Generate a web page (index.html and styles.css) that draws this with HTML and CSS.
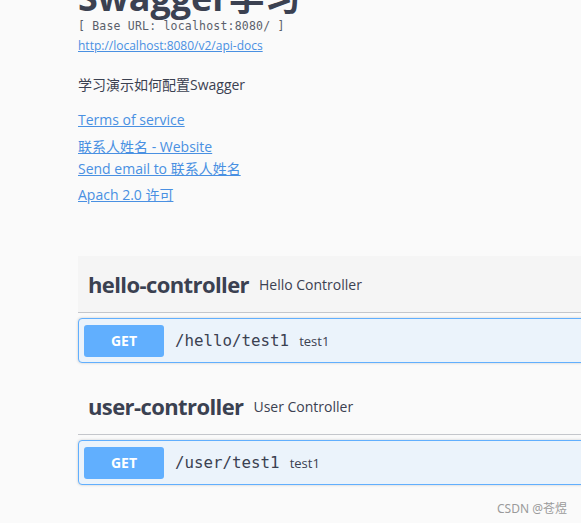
FILE: index.html
```html
<!DOCTYPE html>
<html>
<head>
<meta charset="utf-8">
<link rel="stylesheet" href="styles.css">
</head>
<body>
<div class="page">
  <div class="info">
    <h2 class="title">Swagger学习</h2>
    <div class="base-url">[ Base URL: localhost:8080/ ]</div>
    <a class="spec-link" href="#">http://localhost:8080/v2/api-docs</a>
    <div class="description">学习演示如何配置Swagger</div>
    <div class="terms"><a href="#">Terms of service</a></div>
    <div class="contact">
      <a href="#">联系人姓名 - Website</a>
      <a href="#">Send email to 联系人姓名</a>
    </div>
    <div class="license"><a href="#">Apach 2.0 许可</a></div>
  </div>

  <div class="tags">
    <div class="tag-section">
      <h3 class="tag-header hover"><span class="tag-name">hello-controller</span><small class="tag-desc">Hello Controller</small></h3>
      <div class="opblock">
        <span class="method">GET</span>
        <span class="path">/hello/test1</span>
        <span class="summary">test1</span>
      </div>
    </div>

    <div class="tag-section">
      <h3 class="tag-header"><span class="tag-name">user-controller</span><small class="tag-desc">User Controller</small></h3>
      <div class="opblock">
        <span class="method">GET</span>
        <span class="path">/user/test1</span>
        <span class="summary">test1</span>
      </div>
    </div>
  </div>
</div>
<div class="watermark">CSDN @苍煜</div>
</body>
</html>
```
FILE: styles.css
```css
html, body {
  margin: 0;
  padding: 0;
  background: #fafafa;
  overflow: hidden;
  height: 523px;
}
body {
  font-family: "Open Sans", "Noto Sans CJK SC", sans-serif;
  color: #3b4151;
  position: relative;
}
.page {
  padding-left: 78px;
  width: 620px;
}
.info {
  display: flex;
  flex-direction: column;
  align-items: flex-start;
}
.title {
  margin: -20px 0 0 0;
  font-size: 36px;
  line-height: 36px;
  font-weight: 700;
  color: #3b4151;
  font-family: "Open Sans", "Noto Sans CJK SC", sans-serif;
}
.base-url {
  margin-top: 3px;
  font-family: "DejaVu Sans Mono", "Liberation Mono", monospace;
  font-size: 11.5px;
  line-height: 14px;
  color: #5a5f6b;
  letter-spacing: 0.2px;
}
.spec-link {
  margin-top: 5px;
  font-size: 12px;
  line-height: 16px;
  color: #4990e2;
}
a { color: #4990e2; }
.description {
  margin-top: 21px;
  font-size: 14px;
  line-height: 20px;
}
.terms {
  margin-top: 15px;
  font-size: 14px;
  line-height: 20px;
}
.contact {
  margin-top: 6px;
  display: flex;
  flex-direction: column;
  font-size: 14px;
  line-height: 22px;
}
.license {
  margin-top: 5px;
  font-size: 14px;
  line-height: 20px;
}
.tags {
  margin-top: 51px;
}
.tag-header {
  margin: 0;
  display: flex;
  align-items: center;
  padding: 0 10px;
  height: 56px;
  border-bottom: 1px solid #c4c6cb;
}
.tag-header.hover { background: #f5f5f5; }
.tag-name {
  font-family: "Open Sans", sans-serif;
  font-weight: 700;
  font-size: 22px;
  letter-spacing: -0.6px;
  color: #3b4151;
}
.tag-desc {
  margin-left: 10px;
  font-size: 14px;
  font-weight: 400;
  color: #3b4151;
}
.opblock {
  margin: 5px 0 15px 0;
  display: flex;
  align-items: center;
  height: 43px;
  padding: 0 5px;
  border: 1px solid #61affe;
  border-radius: 4px;
  background: #ebf3fb;
  box-shadow: 0 0 3px rgba(0,0,0,.19);
}
.method {
  width: 80px;
  height: 32px;
  display: flex;
  align-items: center;
  justify-content: center;
  background: #61affe;
  border-radius: 3px;
  color: #fff;
  font-weight: 700;
  font-size: 14px;
}
.path {
  margin-left: 11px;
  font-family: "DejaVu Sans Mono", "Liberation Mono", monospace;
  font-size: 15.8px;
  font-weight: 400;
  color: #3b4151;
}
.summary {
  margin-left: 10px;
  font-size: 13px;
  color: #3b4151;
}
.watermark {
  position: absolute;
  right: 14px;
  top: 499px;
  font-size: 12px;
  color: #9a9a9a;
  font-family: "Noto Sans", "Noto Sans CJK SC", sans-serif;
}
```
